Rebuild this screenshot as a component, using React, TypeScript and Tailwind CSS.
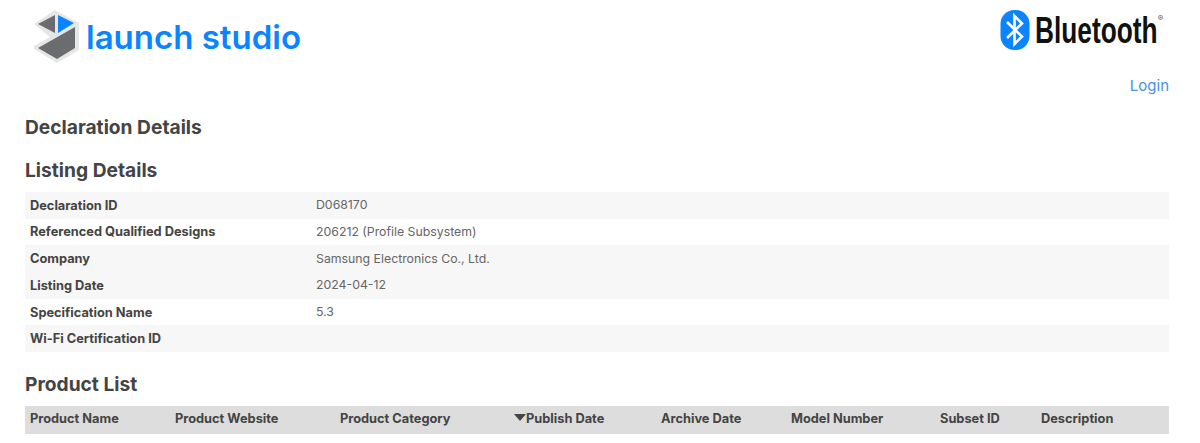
const font = { fontFamily: 'Inter, "Open Sans", sans-serif' }

const details = [
  { label: 'Declaration ID', value: 'D068170', shaded: true },
  { label: 'Referenced Qualified Designs', value: '206212 (Profile Subsystem)', shaded: false },
  { label: 'Company', value: 'Samsung Electronics Co., Ltd.', shaded: true },
  { label: 'Listing Date', value: '2024-04-12', shaded: true },
  { label: 'Specification Name', value: '5.3', shaded: false },
  { label: 'Wi-Fi Certification ID', value: '', shaded: true },
]

const productColumns = [
  { label: 'Product Name', width: 'w-[145px]' },
  { label: 'Product Website', width: 'w-[165px]' },
  { label: 'Product Category', width: 'w-[174px]' },
  { label: 'Publish Date', width: 'w-[147px]', sorted: true },
  { label: 'Archive Date', width: 'w-[130px]' },
  { label: 'Model Number', width: 'w-[149px]' },
  { label: 'Subset ID', width: 'w-[101px]' },
  { label: 'Description', width: 'flex-1' },
]

function LaunchLogo() {
  return (
    <div className="flex items-center">
      <svg width="56" height="56" viewBox="0 0 56 56">
        <path d="M24 1 L48 14 L48 41 L26 54 L3 40 L3 37 L19 28 L3 15 Z" fill="#e6e6e6" />
        <path d="M7 15 L24 6 L24 24 Z" fill="#6b6c70" />
        <path d="M27 6 L43 14 L27 24 Z" fill="#0a84ff" />
        <path d="M7 39 L44 18 L44 39 L26 50 Z" fill="#6b6c70" />
      </svg>
      <span
        className="text-[33px] leading-none font-semibold text-[#0a84ff] -ml-[1px] mt-[1px]"
        style={font}
      >
        launch studio
      </span>
    </div>
  )
}

function BluetoothLogo() {
  return (
    <div className="flex items-center">
      <svg width="30" height="42" viewBox="0 0 30 42">
        <rect x="0.5" y="1" width="29" height="40" rx="14" fill="#0a84ff" />
        <path
          d="M7 13 L22 27.5 L14.5 35 L14.5 7 L22 14.5 L7 29"
          fill="none"
          stroke="#fff"
          strokeWidth="2.6"
        />
      </svg>
      <span
        className="text-[37px] leading-none font-bold text-[#111] ml-[5px] scale-x-[0.71] origin-left w-[123px] whitespace-nowrap"
        style={{ fontFamily: '"Liberation Sans", sans-serif' }}
      >
        Bluetooth
      </span>
      <span className="self-start mt-[5px] text-[8px] leading-none text-[#555]">®</span>
    </div>
  )
}

export default function App() {
  return (
    <div className="h-[443px] overflow-hidden bg-white text-[#444]" style={font}>
      <header className="flex justify-between items-start pl-[31px] pr-[37px] pt-[9px] h-[70px]">
        <LaunchLogo />
        <BluetoothLogo />
      </header>

      <main className="pl-[25px] pr-[31px]">
        <div className="flex justify-end h-[32px] items-center text-[15px] text-[#4a90e2]">
          <a>Login</a>
        </div>
        <h1 className="text-[19.2px] font-bold leading-[24px] mt-[13px]">Declaration Details</h1>
        <h2 className="text-[19.2px] font-bold leading-[24px] mt-[19px]">Listing Details</h2>

        <div className="mt-[10px]">
          {details.map(row => (
            <div
              key={row.label}
              className={`flex items-center h-[26.7px] pl-[5px] text-[12.8px] ${row.shaded ? 'bg-[#f7f7f7]' : 'bg-white'}`}
            >
              <div className="w-[286px] font-bold">{row.label}</div>
              <div className="text-[12.3px] text-[#666]">{row.value}</div>
            </div>
          ))}
        </div>

        <h2 className="text-[19.2px] font-bold leading-[24px] mt-[20px]">Product List</h2>

        <div className="flex items-center h-[28px] mt-[10px] pl-[5px] pb-[3px] bg-[#dddddd] text-[12.8px] font-bold">
          {productColumns.map(col => (
            <div key={col.label} className={`${col.width} flex items-center whitespace-nowrap`}>
              {col.sorted && (
                <svg width="12" height="7" viewBox="0 0 12 7" className="shrink-0 -mt-[2px]">
                  <path d="M0 0 H12 L6 7 Z" fill="#444" />
                </svg>
              )}
              {col.label}
            </div>
          ))}
        </div>
      </main>
    </div>
  )
}
